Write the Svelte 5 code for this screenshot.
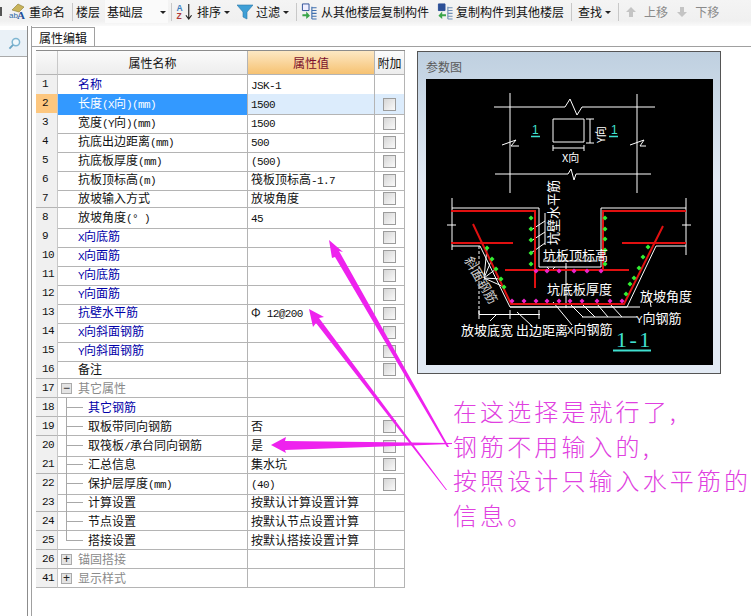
<script lang="ts">
    type Row = {
        no: number;
        name: string;
        value?: string;
        kind?: 'blue' | 'group';
        tree?: boolean;
        last?: boolean;
        open?: boolean;
        check?: boolean;
    };

    const rows: Row[] = [
        { no: 1, name: '名称', value: 'JSK-1', kind: 'blue' },
        { no: 2, name: '长度(X向)(mm)', value: '1500', check: true },
        { no: 3, name: '宽度(Y向)(mm)', value: '1500', check: true },
        { no: 4, name: '抗底出边距离(mm)', value: '500', check: true },
        { no: 5, name: '抗底板厚度(mm)', value: '(500)', check: true },
        { no: 6, name: '抗板顶标高(m)', value: '筏板顶标高-1.7', check: true },
        { no: 7, name: '放坡输入方式', value: '放坡角度', check: true },
        { no: 8, name: '放坡角度(° )', value: '45', check: true },
        { no: 9, name: 'X向底筋', kind: 'blue', check: true },
        { no: 10, name: 'X向面筋', kind: 'blue', check: true },
        { no: 11, name: 'Y向底筋', kind: 'blue', check: true },
        { no: 12, name: 'Y向面筋', kind: 'blue', check: true },
        { no: 13, name: '抗壁水平筋', value: 'Φ 12@200', kind: 'blue', check: true },
        { no: 14, name: 'X向斜面钢筋', kind: 'blue', check: true },
        { no: 15, name: 'Y向斜面钢筋', kind: 'blue', check: true },
        { no: 16, name: '备注', check: true },
        { no: 17, name: '其它属性', kind: 'group', open: true },
        { no: 18, name: '其它钢筋', kind: 'blue', tree: true },
        { no: 19, name: '取板带同向钢筋', value: '否', tree: true, check: true },
        { no: 20, name: '取筏板/承台同向钢筋', value: '是', tree: true, check: true },
        { no: 21, name: '汇总信息', value: '集水坑', tree: true, check: true },
        { no: 22, name: '保护层厚度(mm)', value: '(40)', tree: true, check: true },
        { no: 23, name: '计算设置', value: '按默认计算设置计算', tree: true },
        { no: 24, name: '节点设置', value: '按默认节点设置计算', tree: true },
        { no: 25, name: '搭接设置', value: '按默认搭接设置计算', tree: true, last: true },
        { no: 26, name: '锚固搭接', kind: 'group' },
        { no: 41, name: '显示样式', kind: 'group' }
    ];

    // ASCII is half-width in the original font, so it gets its own smaller run
    function runs(text: string) {
        return text.match(/[\x20-\x7e°]+|[^\x20-\x7e°]+/g) ?? [];
    }
    const isLatin = (run: string) => /^[\x20-\x7e°]/.test(run);

    const greens = [
        [531, 218], [531, 229], [531, 240], [531, 253], [531, 264],
        [605, 218], [605, 229], [605, 239], [605, 250], [605, 264],
        [487, 248], [492, 259], [496, 269], [501, 279], [504, 287],
        [648, 247], [643, 257], [639, 268], [634, 278], [630, 284], [626, 294]
    ];
    const pinks = [
        [536, 271], [547, 271], [559, 271], [574, 271], [587, 271], [601, 271],
        [512, 301], [524, 301], [536, 301], [547, 301], [559, 301], [570, 301],
        [582, 301], [597, 301], [610, 301], [622, 301]
    ];
    const leaders = [
        'M484 278L487 248M484 278L492 259M484 278L496 269M484 278L501 279M484 278L504 287',
        'M531 230L545 221M531 241L545 232M531 253L545 243',
        'M545 213V245M543 261H596M566 263V308',
        'M582 317H637M570 304L583 317M582 304L595 317M597 304L608 317M610 304L622 317',
        'M553 302L572 325M497 314L490 321M517 312L532 326',
        'M479 314.5H540M479 310V319M510 310V319M539 310V319',
        'M648 298Q651 302 651 307'
    ];
</script>

<div class="page">
    <div class="toolbar">
        <span class="edge"></span>
        <svg class="ic" viewBox="0 0 17 17">
            <path d="M3 7L9 1l6 3-5 5z" fill="#c9b35a" stroke="#8a7a30" stroke-width=".6" />
            <text x="0" y="15" class="ab">ab</text>
            <text x="8" y="16" class="bigA">A</text>
        </svg>
        <span class="lbl">重命名</span>
        <span class="sep"></span>
        <span class="lbl floor">楼层</span>
        <span class="combo">基础层<i class="caret"></i></span>
        <span class="sep"></span>
        <svg class="ic sort" viewBox="0 0 17 18">
            <text x="0" y="8" class="az a">A</text>
            <text x="0" y="17" class="az z">Z</text>
            <path d="M13 1V16M10 13l3 4 3-4" fill="none" stroke="#222" stroke-width="1.2" />
        </svg>
        <span class="lbl">排序</span><i class="caret"></i>
        <svg class="ic funnel" viewBox="0 0 16 16">
            <path d="M0 1H16L10 8V15L6 13V8z" fill="#3f9fd6" stroke="#2b78a8" stroke-width=".6" />
        </svg>
        <span class="lbl none">过滤</span><i class="caret"></i>
        <span class="sep"></span>
        <svg class="ic copy1" viewBox="0 0 17 18">
            <path d="M1 1H8V8H1z" fill="#eef" stroke="#2c4f96" />
            <path d="M1 12H5V9L9 13.5 5 17V14H1z" fill="#3aa54a" />
            <path d="M11 5H16M11 8H16M11 11H16M11 14H16M11 17H16M11 4V17" stroke="#3f6fae" stroke-width="1.2" />
        </svg>
        <span class="lbl">从其他楼层复制构件</span>
        <svg class="ic copy2" viewBox="0 0 17 18">
            <path d="M1 1H8V8H1z" fill="#2c4f96" stroke="#2c4f96" />
            <path d="M9 12H5V9L1 13.5 5 17V14H9z" fill="#3aa54a" />
            <path d="M11 5H16M11 8H16M11 11H16M11 14H16M11 17H16M11 4V17" stroke="#6f8fb5" stroke-width="1.2" />
        </svg>
        <span class="lbl">复制构件到其他楼层</span>
        <span class="sep"></span>
        <span class="lbl">查找</span><i class="caret"></i>
        <span class="sep"></span>
        <svg class="ic small first" viewBox="0 0 10 10"><path d="M5 0L10 5H7V10H3V5H0z" fill="#c4c4c4" /></svg>
        <span class="lbl off up">上移</span>
        <svg class="ic small" viewBox="0 0 10 10"><path d="M5 10L10 5H7V0H3V5H0z" fill="#c4c4c4" /></svg>
        <span class="lbl off">下移</span>
    </div>

    <div class="body">
        <aside class="side">
            <div class="search">
                <svg viewBox="0 0 14 14" width="13" height="13">
                    <circle cx="8.5" cy="5.5" r="4" fill="#f0f8fc" stroke="#7fb6d2" stroke-width="1.6" />
                    <path d="M5.5 8.5L1.5 12.5" stroke="#6aa5c4" stroke-width="2" />
                </svg>
            </div>
        </aside>

        <main class="main">
            <div class="tabs"><span class="tab">属性编辑</span></div>

            <div class="content">
                <div class="grid">
                    <div class="row head">
                        <div class="no"></div>
                        <div class="name">属性名称</div>
                        <div class="val">属性值</div>
                        <div class="add">附加</div>
                    </div>
                    {#each rows as row (row.no)}
                        <div class="row" class:selected={row.no === 2}>
                            <div class="no">{row.no}</div>
                            <div
                                class="name {row.kind ?? ''}"
                                class:tree={row.tree}
                                class:last={row.last}
                            >
                                {#if row.kind === 'group'}
                                    <span class="expander">{row.open ? '−' : '+'}</span>
                                {/if}
                                {#each runs(row.name) as run}
                                    <span class:lat={isLatin(run)}>{run}</span>
                                {/each}
                            </div>
                            <div class="val">
                                {#each runs(row.value ?? '') as run}
                                    <span class:lat={isLatin(run)}>{run}</span>
                                {/each}
                            </div>
                            <div class="add">
                                {#if row.check}<span class="box"></span>{/if}
                            </div>
                        </div>
                    {/each}
                </div>

                <div class="right">
                    <section class="panel">
                        <h3>参数图</h3>
                        <svg class="drawing" viewBox="426 79 287 286">
                            <rect x="426" y="79" width="287" height="286" fill="#000" />
                            <!-- plan -->
                            <g class="wht">
                                <path d="M494 107H565L570 99 577 115 582 107H655" />
                                <path d="M495 174H568L571 169 574 180 576 174H651" />
                                <path d="M510 93V193M637 94V193" />
                                <path d="M502 145L516 140 511 146H519M630 145L644 140 640 146H646" />
                                <path d="M553 119H584V142H553z" />
                                <path d="M586 119H594M590 119V143M586 143H594M553 148H584M553 145V151M584 145V151" />
                            </g>
                            <text class="t lab" x="562" y="162">X向</text>
                            <text class="t lab" transform="translate(605 143) rotate(-90)">Y向</text>
                            <text class="cy" x="532" y="134">1</text>
                            <text class="cy" x="611" y="134">1</text>
                            <path d="M531 136.5H540M609 136.5H618" stroke="#40e0d0" stroke-width="1.5" />

                            <!-- section -->
                            <g class="wht">
                                <path d="M452 198V250M452 208H539V267H601V208H686M686 198V255" />
                                <path d="M452 246H480L510 307H627L656 246H686" />
                                <path d="M510 307H640M447 225H456M682 225H691M547 267L551 271 555 267" />
                                <path d="M479 246V315" stroke-dasharray="3 2" />
                                {#each leaders as d}<path {d} />{/each}
                            </g>
                            <g class="red">
                                <path d="M451 211H535V288M686 211H603V270M505 270H629" />
                                <path d="M451 243H513M622 243H686" />
                                <path d="M473 224L511 304H624L663 226" />
                            </g>
                            {#each greens as [x, y]}
                                <path d="M{x} {y - 2.5}l2.5 2.5-2.5 2.5-2.5-2.5z" fill="#33ee33" />
                            {/each}
                            {#each pinks as [x, y]}
                                <path d="M{x} {y - 2.5}l2.5 2.5-2.5 2.5-2.5-2.5z" fill="#ee22cc" />
                            {/each}

                            <text class="t" transform="translate(558 245) rotate(-90)">坑壁水平筋</text>
                            <text class="t" x="543" y="260">坑板顶标高</text>
                            <text class="t" x="547" y="294">坑底板厚度</text>
                            <text class="t" x="640" y="301">放坡角度</text>
                            <text class="t" x="636" y="323"><tspan class="sm">Y</tspan>向钢筋</text>
                            <text class="t" x="461" y="335">放坡底宽</text>
                            <text class="t" x="516" y="335">出边距离</text>
                            <text class="t" x="567" y="334"><tspan class="sm">X</tspan>向钢筋</text>
                            <text class="t slant" transform="translate(464 260) rotate(60)">斜面钢筋</text>
                            <text class="big" x="616" y="347">1-1</text>
                            <path d="M613 350.5H651" stroke="#40e0d0" stroke-width="2" />
                        </svg>
                    </section>

                    <p class="note">在这选择是就行了,<br />钢筋不用输入的,<br />按照设计只输入水平筋的<br />信息。</p>
                </div>
            </div>
        </main>
    </div>

    <!-- the annotation arrows were drawn over the screenshot -->
    <svg class="arrows" viewBox="0 0 751 616">
        <polygon points="329,240 343,252 339,251 449,447 447,447 335,257 332,258" />
        <polygon points="309,309 324,317 319,318 447,490 446,490 316,323 313,327" />
        <polygon points="271,445 286,437 285,441 452,443 452,444 285,450 286,453" />
    </svg>
</div>

<style>
    :global(body) {
        margin: 0;
        background: #fff;
    }

    .page {
        position: relative;
        width: 751px;
        height: 616px;
        overflow: hidden;
        font-family: "Noto Sans CJK SC", "Liberation Sans", sans-serif;
        font-size: 12px;
        color: #111;
    }

    .toolbar {
        display: flex;
        align-items: center;
        height: 26px;
        box-sizing: border-box;
        padding-bottom: 3px;
        background: linear-gradient(#f4f4f4, #f0f0f0 80%, #fafafa);
        white-space: nowrap;
    }

    .edge {
        width: 2px;
        height: 9px;
        margin-right: 7px;
        background: #555;
    }

    .ic {
        width: 17px;
        height: 17px;
        flex: none;
    }

    .sort { margin: 0 1px 0 1px; }
    .funnel { width: 16px; height: 16px; margin-right: 3px; }
    .copy1 { margin-left: 1px; }
    .copy2 { margin-left: 8px; margin-right: -1px; }
    .small { width: 10px; height: 10px; margin-right: 8px; }
    .first { margin-left: 4px; }

    .ab { font: 8px "Liberation Sans", sans-serif; fill: #2d6aa5; }
    .bigA { font: bold 11px "Liberation Serif", serif; fill: #1d4f9a; }
    .az { font: bold 9px "Liberation Sans", sans-serif; }
    .a { fill: #3d7fc0; }
    .z { fill: #b03a3a; }

    .lbl { margin-left: 3px; }
    .floor, .none { margin-left: 0; }
    .off { color: #8a8a8a; margin: 0; }
    .up { margin-right: 9px; }

    .caret {
        display: inline-block;
        width: 0;
        height: 0;
        margin: 1px 7px 0 3px;
        border: 3px solid transparent;
        border-top: 3px solid #222;
        border-bottom: 0;
    }

    .sep {
        width: 1px;
        height: 18px;
        margin: 0 3px 0 7px;
        background: #c8c8c8;
    }

    .combo + .sep { margin-left: 3px; }
    .caret + .sep { margin-left: 0; }

    .combo {
        display: flex;
        align-items: center;
        justify-content: space-between;
        width: 63px;
        box-sizing: border-box;
        margin-left: 5px;
        padding: 3px 0 3px 2px;
        background: #fafafa;
    }

    .combo .caret { margin: 1px 2px 0 0; }

    .body {
        display: flex;
        height: 590px;
    }

    .side {
        width: 27px;
        flex: none;
        border-right: 1px solid #8c8c8c;
    }

    .search {
        display: flex;
        align-items: center;
        justify-content: flex-end;
        height: 26px;
        margin-top: 4px;
        padding-right: 6px;
        background: #eaf1f7;
        border-bottom: 1px solid #aaa;
    }

    .main {
        flex: 1;
        min-width: 0;
        margin-left: 3px;
        border-left: 1px solid #a0a0a0;
    }

    .tabs {
        height: 20px;
        box-sizing: border-box;
        margin-top: 1px;
        border-bottom: 1px solid #a0a0a0;
    }

    .tab {
        display: inline-block;
        height: 19px;
        width: 63px;
        box-sizing: border-box;
        padding-left: 7px;
        line-height: 19px;
        font-size: 12px;
        background: #fff;
        border: 1px solid #a0a0a0;
        border-left: 0;
        border-bottom: 0;
    }

    .content {
        display: flex;
        padding: 3px 0 0 4px;
    }

    .grid {
        width: 369px;
        flex: none;
        border-top: 1px solid #8c8c8c;
    }

    .row {
        display: grid;
        grid-template-columns: 22px 190px 127px 30px;
        height: 19px;
        line-height: 18px;
    }

    .row > div {
        box-sizing: border-box;
        border-right: 1px solid #b4b4b4;
        border-bottom: 1px solid #b4b4b4;
        white-space: nowrap;
    }

    .row .no {
        padding-left: 6px;
        font: 11px/18px "Liberation Mono", monospace;
        letter-spacing: -0.6px;
        background: #f0f0f0;
        border-color: #d4d4d4 #c8c8c8 #b4b4b4 transparent;
    }

    .row .name {
        position: relative;
        padding-left: 20px;
    }

    .row .val {
        padding-left: 3px;
        white-space: pre;
    }

    .lat {
        font: 11px/18px "Liberation Mono", monospace;
        letter-spacing: -0.6px;
    }

    .add {
        display: flex;
        align-items: center;
        justify-content: center;
    }

    .head {
        height: 24px;
        line-height: 23px;
        font-size: 12px;
    }

    .head > div {
        background: linear-gradient(#fbfbfb, #ededed);
        text-align: center;
    }

    .row.head .no { background: linear-gradient(#fafafa, #ececec); padding: 0; }
    .row.head .name { padding: 0; }

    .row.head .val {
        padding: 0;
        color: #7a0f2c;
        background: linear-gradient(#fde8c4, #f6c272);
    }

    .row.selected .no { background: #fdc77f; }
    .row.selected .name { background: #3399ff; color: #fff; border-bottom-color: #3399ff; }
    .selected .val, .selected .add { background: #dcecfc; }

    .blue { color: #0000a8; }
    .group { color: #8a8a8a; }
    .row .group { padding-left: 3px; display: flex; align-items: center; }

    .expander {
        display: flex;
        align-items: center;
        justify-content: center;
        width: 11px;
        height: 11px;
        margin-right: 6px;
        font: 12px/11px "Liberation Sans", sans-serif;
        color: #222;
        background: #e4e4e4;
        border: 1px solid #aaa;
        box-sizing: border-box;
    }

    .row .tree { padding-left: 30px; }

    .tree::before,
    .tree::after {
        content: "";
        position: absolute;
        left: 8px;
        background: #a8a8a8;
    }

    .tree::before { top: 0; width: 1px; height: 19px; }
    .tree.last::before { height: 9px; }
    .tree::after { top: 9px; width: 17px; height: 1px; }

    .box {
        width: 13px;
        height: 13px;
        box-sizing: border-box;
        background: linear-gradient(135deg, #d6d6d6, #fafafa);
        border: 1px solid #9c9c9c;
    }

    .right {
        margin-left: 12px;
    }

    .panel {
        width: 304px;
        height: 323px;
        box-sizing: border-box;
        margin-top: 1px;
        padding: 0 7px 8px 8px;
        background: linear-gradient(#bfd0e0, #e2eaf4 40%);
        border: 1px solid #555;
    }

    .panel h3 {
        margin: 0;
        height: 27px;
        line-height: 30px;
        font-size: 12px;
        font-weight: normal;
        color: #5a5a5a;
    }

    .drawing {
        display: block;
        width: 287px;
        height: 286px;
    }

    .wht path, .wht {
        fill: none;
        stroke: #fff;
        stroke-width: 1;
    }

    .red {
        fill: none;
        stroke: #e01010;
        stroke-width: 2;
    }

    .t {
        font-size: 13px;
        fill: #fff;
    }

    .lab { font-size: 11px; }
    .sm { font: 11px "Liberation Mono", monospace; }
    .slant { fill: #ccc; }

    .cy {
        font: 12px "Liberation Sans", sans-serif;
        fill: #40e0d0;
    }

    .big {
        font: 22px "Liberation Serif", serif;
        letter-spacing: 2.5px;
        fill: #40e0d0;
    }

    .note {
        margin: 20px 0 0 36px;
        font-size: 24px;
        font-weight: 300;
        line-height: 34.5px;
        letter-spacing: 3.1px;
        color: #e040e0;
        white-space: nowrap;
    }

    .arrows {
        position: absolute;
        inset: 0;
        width: 751px;
        height: 616px;
        pointer-events: none;
    }

    .arrows polygon {
        fill: #ee22ee;
    }
</style>
